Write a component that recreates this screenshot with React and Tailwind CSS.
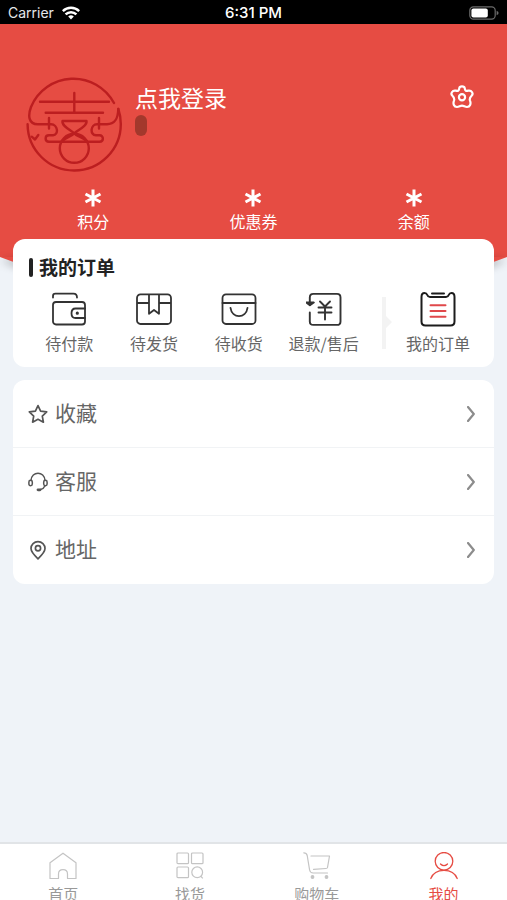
import React, { useState } from "react";

const stats = ["积分", "优惠券", "余额"];

const WifiIcon = () => (
  <svg className="w-[18px] h-[14px]" viewBox="0 0 18 14" fill="#fff">
    <path d="M9 13.5 L6.2 10.6 A4 4 0 0 1 11.8 10.6 Z" />
    <path d="M3.6 8.4 A7.6 7.6 0 0 1 14.4 8.4" fill="none" stroke="#fff" strokeWidth="2.5" />
    <path d="M0.8 5.1 A11.6 11.6 0 0 1 17.2 5.1" fill="none" stroke="#fff" strokeWidth="2.5" />
  </svg>
);

const BatteryIcon = () => (
  <svg className="w-[30px] h-[14px]" viewBox="0 0 30 14">
    <rect x="0.8" y="0.8" width="25.4" height="12.4" rx="3.6" fill="none" stroke="#6b6b6b" strokeWidth="1.2" />
    <rect x="2.4" y="2.4" width="16.4" height="9.2" rx="2" fill="#fff" />
    <path d="M27.6 4.8 Q29.6 5.6 29.6 7 Q29.6 8.4 27.6 9.2 Z" fill="#6b6b6b" />
  </svg>
);

const Emblem = () => (
  <svg className="w-24 h-24" viewBox="0 0 96 96" fill="none" stroke="#bc1e20" strokeWidth="2.4" strokeLinecap="round" strokeLinejoin="round">
    <path d="M88 26 A46 46 0 0 0 5 30 C2 38 2 47.3 12 47.3 H25 C32 47.3 33 58 27 58.3 H23 C18.5 58.3 18.5 64.8 23 64.8 H73.5 C78 64.8 78 58.3 73.5 58.3 H70 C63.5 58 64.5 47.3 71 47.3 H81 C89 47 92 42 92.3 32" />
    <path d="M1.6 47.3 A46.5 46.5 0 0 0 48.2 93.5 A46.5 46.5 0 0 0 94.8 47 C94.8 41 94 37 92.3 32" />
    <path d="M5.7 59.7 L9 62.5 L12.3 58" />
    <path d="M14 24.7 H83 M48.3 16 V35.7 M19.7 35.7 H77" />
    <path d="M23 41 V51.5 M73 41 V51.5" />
    <path d="M36.5 44 H60.5 C61.5 49 52 53 48.3 56.3 C44.5 53 35.5 49 36.5 44 Z" />
    <path d="M36 64.5 C40 60 45 60 48.3 56.3 C52 60 57 60 61 64.5" />
    <circle cx="48.3" cy="71.3" r="14.5" />
  </svg>
);

const SettingIcon = () => (
  <svg className="w-6 h-6" viewBox="0 0 24 24" fill="none" stroke="#fff" strokeWidth="2.2" strokeLinejoin="round">
    <path d="M9.3 3.2 C9.6 0.8 14.4 0.8 14.7 3.2 C15 5.6 15.8 6.2 18.2 5.7 C21.8 5 23.8 8.8 21.6 10.7 C19.6 12.6 19.2 13.4 20 15.6 C21.3 18.8 20 21.8 17 22 C15 22 13.8 20.6 12 20.6 C10.2 20.6 9 22 7 22 C4 21.8 2.7 18.8 4 15.6 C4.8 13.4 4.4 12.6 2.4 10.7 C0.2 8.8 2.2 5 5.8 5.7 C8.2 6.2 9 5.6 9.3 3.2 Z" />
    <circle cx="12" cy="12.3" r="3.1" />
  </svg>
);

const WalletIcon = () => (
  <svg className="w-9 h-9" viewBox="0 0 36 36" fill="none" stroke="#333" strokeWidth="1.8" strokeLinecap="round">
    <path d="M2 6.5 V5 Q2 2.7 4.4 2.7 H22.5 Q26 2.7 26 6.5" />
    <rect x="2" y="11" width="32" height="22.5" rx="3" />
    <path d="M34 17.5 H24.5 Q20.5 17.5 20.5 22.2 Q20.5 27 24.5 27 H34" />
    <circle cx="26.3" cy="22.2" r="0.7" fill="#333" />
  </svg>
);

const BoxIcon = () => (
  <svg className="w-9 h-9" viewBox="0 0 36 36" fill="none" stroke="#333" strokeWidth="1.8" strokeLinejoin="round">
    <rect x="1" y="3.4" width="34" height="29.6" rx="3.5" />
    <path d="M1 12 H13 M23 12 H35" />
    <path d="M13 3.4 V22.8 L18 19 L23 22.8 V3.4" />
  </svg>
);

const BagIcon = () => (
  <svg className="w-9 h-9" viewBox="0 0 36 36" fill="none" stroke="#333" strokeWidth="1.8" strokeLinecap="round">
    <rect x="1.5" y="3.4" width="33" height="29.6" rx="3.5" />
    <path d="M1.5 12 H34.5 M9.5 16.8 C11 27.8 25 27.8 26.5 16.8" />
  </svg>
);

const RefundIcon = () => (
  <svg className="w-9 h-9" viewBox="0 0 36 36" fill="none" stroke="#333" strokeWidth="1.9" strokeLinecap="round" strokeLinejoin="round">
    <path d="M3.8 14 V6.4 Q3.8 2.9 7.3 2.9 H31 Q34.5 2.9 34.5 6.4 V30.4 Q34.5 33.9 31 33.9 H7.3 Q3.8 33.9 3.8 30.4 V21.5" />
    <path d="M0.2 11.5 L3.9 14.2 L7.8 11.5 Z" fill="#333" />
    <path d="M14 10.5 L19 15.5 L24 10.5 M12.5 16.5 H25.5 M12.5 21.5 H25.5 M19 16.5 V28.5" />
  </svg>
);

const AllOrdersIcon = () => (
  <svg className="w-9 h-9" viewBox="0 0 36 36" fill="none" stroke="#1c1c1c" strokeWidth="2" strokeLinecap="round" strokeLinejoin="round">
    <path d="M1.5 30.5 V6 Q1.5 2 4.5 2 Q6.5 2 7.3 4 Q8 6 10 6 H26 Q28 6 28.7 4 Q29.5 2 31.5 2 Q34.5 2 34.5 6 V30.5 Q34.5 34.5 30.5 34.5 H5.5 Q1.5 34.5 1.5 30.5 Z" />
    <path d="M12 2.4 H24" />
    <path d="M10.5 14.3 H25.5 M10.5 20 H25.5 M10.5 25.7 H25.5" stroke="#e0484b" />
  </svg>
);

const StarIcon = () => (
  <svg className="w-5 h-5" viewBox="0 0 20 20" fill="none" stroke="#555" strokeWidth="1.7" strokeLinejoin="round">
    <path d="M10 1.6 L12.6 7.1 L18.7 7.9 L14.3 12.1 L15.4 18.2 L10 15.3 L4.6 18.2 L5.7 12.1 L1.3 7.9 L7.4 7.1 Z" />
  </svg>
);

const HeadsetIcon = () => (
  <svg className="w-5 h-5" viewBox="0 0 20 20" fill="none" stroke="#555" strokeWidth="1.5" strokeLinecap="round">
    <path d="M3 8.5 C3.5 -1.2 16.5 -1.2 17 8.5" />
    <rect x="0.9" y="8.3" width="3.4" height="5.4" rx="1.7" />
    <rect x="15.7" y="8.3" width="3.4" height="5.4" rx="1.7" />
    <path d="M17 13.8 Q15.8 16.8 12.5 17.6" />
    <path d="M10 17.8 H12" strokeWidth="2.8" />
  </svg>
);

const PinIcon = () => (
  <svg className="w-5 h-5" viewBox="0 0 20 20" fill="none" stroke="#555" strokeWidth="1.7" strokeLinejoin="round">
    <path d="M10 18.8 C5.5 14.6 3 11.8 3 8.6 A7 6.9 0 0 1 17 8.6 C17 11.8 14.5 14.6 10 18.8 Z" />
    <circle cx="10" cy="8.2" r="2.6" />
  </svg>
);

const ArrowIcon = () => (
  <svg className="w-2 h-4" viewBox="0 0 8 16" fill="none" stroke="#8c8c8c" strokeWidth="2.2" strokeLinecap="round" strokeLinejoin="round">
    <path d="M1 1 L6.8 8 L1 15" />
  </svg>
);

const HomeIcon = () => (
  <svg className="w-7 h-7" viewBox="0 0 28 28" fill="none" stroke="currentColor" strokeWidth="1.2" strokeLinejoin="round">
    <path d="M1 10.8 L14 1.2 L27 10.8 V26.5 H18.5 V22 C18.5 16.2 9.5 16.2 9.5 22 V26.5 H1 Z" />
  </svg>
);

const FindIcon = () => (
  <svg className="w-7 h-7" viewBox="0 0 28 28" fill="none" stroke="currentColor" strokeWidth="1.2">
    <rect x="1" y="1" width="11.5" height="10.7" rx="1" />
    <rect x="15.5" y="1" width="11.5" height="10.7" rx="1" />
    <rect x="1" y="15" width="11.5" height="10.7" rx="1" />
    <circle cx="21.2" cy="20.3" r="5.4" />
    <path d="M24.5 24 L26.8 26.4" />
  </svg>
);

const CartIcon = () => (
  <svg className="w-7 h-7" viewBox="0 0 28 28" fill="none" stroke="currentColor" strokeWidth="1.2" strokeLinecap="round" strokeLinejoin="round">
    <path d="M0.8 0.8 Q3.6 0.8 4.2 3.5 L6.6 18 Q7.2 21 10.2 21 H24.5" />
    <path d="M8 4 H26.5 L24.5 15.5 Q24.3 16.5 23 16.5 L10.5 17.3" />
    <circle cx="9.5" cy="25" r="1.3" fill="currentColor" />
    <circle cx="23.5" cy="25" r="1.3" fill="currentColor" />
  </svg>
);

const MineIcon = () => (
  <svg className="w-7 h-7" viewBox="0 0 28 28" fill="none" stroke="currentColor" strokeWidth="1.3" strokeLinecap="round">
    <circle cx="14" cy="9.3" r="8.8" />
    <path d="M10.5 12 Q14 15.3 17.5 12" />
    <path d="M0.8 26.5 C5 15.6 23 15.6 27.2 26.5" />
  </svg>
);

const orders = [
  { label: "待付款", icon: <WalletIcon /> },
  { label: "待发货", icon: <BoxIcon /> },
  { label: "待收货", icon: <BagIcon /> },
  { label: "退款/售后", icon: <RefundIcon /> },
];

const links = [
  { label: "收藏", icon: <StarIcon /> },
  { label: "客服", icon: <HeadsetIcon /> },
  { label: "地址", icon: <PinIcon /> },
];

const tabs = [
  { label: "首页", icon: <HomeIcon /> },
  { label: "找货", icon: <FindIcon /> },
  { label: "购物车", icon: <CartIcon /> },
  { label: "我的", icon: <MineIcon /> },
];

const StatusBar = () => (
  <div className="grid grid-cols-3 items-center h-6 px-2 pt-0.5 bg-black text-white text-sm leading-5 font-['Inter',sans-serif]">
    <div className="flex items-center gap-2">
      <span className="text-gray-200">Carrier</span>
      <WifiIcon />
    </div>
    <span className="text-center text-[15px] font-medium">6:31 PM</span>
    <div className="flex justify-end">
      <BatteryIcon />
    </div>
  </div>
);

const OrderButton = ({ icon, label }) => (
  <button className="flex flex-col items-center gap-1 text-base leading-6 text-[#666] whitespace-nowrap cursor-pointer">
    {icon}
    {label}
  </button>
);

const App = () => {
  const [activeTab, setActiveTab] = useState("我的");

  return (
    <div className="flex flex-col h-screen overflow-hidden bg-[#eff3f8] font-['Noto_Sans_CJK_SC',sans-serif]">
      <StatusBar />

      <header className="relative bg-[#e64c43] text-white pt-[53px] pb-6">
        {/* curved bottom edge */}
        <svg className="absolute top-full left-0 w-full h-12 drop-shadow-[0_3px_4px_rgba(0,0,0,0.35)]" viewBox="0 0 507 48" preserveAspectRatio="none">
          <path d="M0 0 C60 24 140 36 253 36 S447 24 507 0 Z" fill="#e64c43" />
        </svg>

        <div className="flex items-start pl-[26px] pr-[33px]">
          <Emblem />
          <div className="ml-[13px] flex-1">
            <button className="block text-[23px] leading-9 mt-0.5 cursor-pointer">点我登录</button>
            <span className="block w-3 h-[21px] rounded-full bg-[#a3382c]" />
          </div>
          <button aria-label="设置" className="mt-2 cursor-pointer">
            <SettingIcon />
          </button>
        </div>

        <ul className="grid grid-cols-3 px-[13px] mt-3 text-center">
          {stats.map((label) => (
            <li key={label} className="flex flex-col items-center">
              <svg className="w-5 h-5 mt-[3px] mb-px" viewBox="0 0 20 20" stroke="#fff" strokeWidth="3">
                <path d="M10 1.5 V18.5 M2.5 6 L17.5 14 M17.5 6 L2.5 14" />
              </svg>
              <span className="text-base leading-6">{label}</span>
            </li>
          ))}
        </ul>
      </header>

      <main className="relative flex-1 px-[13px] -mt-[18px]">
        <section className="bg-white rounded-xl pt-4 pb-3">
          <h2 className="flex items-center gap-1.5 pl-4 text-[19px] leading-6 font-bold text-[#222]">
            <span className="w-1 h-[19px] rounded-full bg-[#222]" />
            我的订单
          </h2>
          <div className="flex mt-3">
            <div className="grid grid-cols-4 flex-1 pl-3.5 pr-4">
              {orders.map((item) => (
                <OrderButton key={item.label} icon={item.icon} label={item.label} />
              ))}
            </div>
            <div className="flex items-center w-28 pr-2.5">
              <svg className="w-2.5 h-[52px]" viewBox="0 0 10 52" fill="#f3f3f3">
                <path d="M0 0 H4 V19 L10 25 L4 31 V52 H0 Z" />
              </svg>
              <div className="flex-1 flex justify-center">
                <OrderButton icon={<AllOrdersIcon />} label="我的订单" />
              </div>
            </div>
          </div>
        </section>

        <nav className="mt-[13px] bg-white rounded-xl divide-y divide-[#f1f3f5]">
          {links.map((item) => (
            <a key={item.label} href="#" className="flex items-center h-[68px] pl-[15px] pr-[19px]">
              {item.icon}
              <span className="flex-1 ml-[7px] pb-1 text-[21px] leading-8 text-[#666]">{item.label}</span>
              <ArrowIcon />
            </a>
          ))}
        </nav>
      </main>

      <nav className="grid grid-cols-4 h-[58px] shrink-0 overflow-hidden bg-white border-t-2 border-[#e1e4e7] pt-2">
        {tabs.map((tab) => (
          <button
            key={tab.label}
            onClick={() => setActiveTab(tab.label)}
            className={`flex flex-col items-center gap-0.5 cursor-pointer ${
              activeTab === tab.label ? "text-[#e64c43]" : "text-[#c4c4c4]"
            }`}
          >
            {tab.icon}
            <span
              className={`text-[15px] leading-6 ${
                activeTab === tab.label ? "text-[#e64c43]" : "text-[#999]"
              }`}
            >
              {tab.label}
            </span>
          </button>
        ))}
      </nav>
    </div>
  );
};

export default App;
